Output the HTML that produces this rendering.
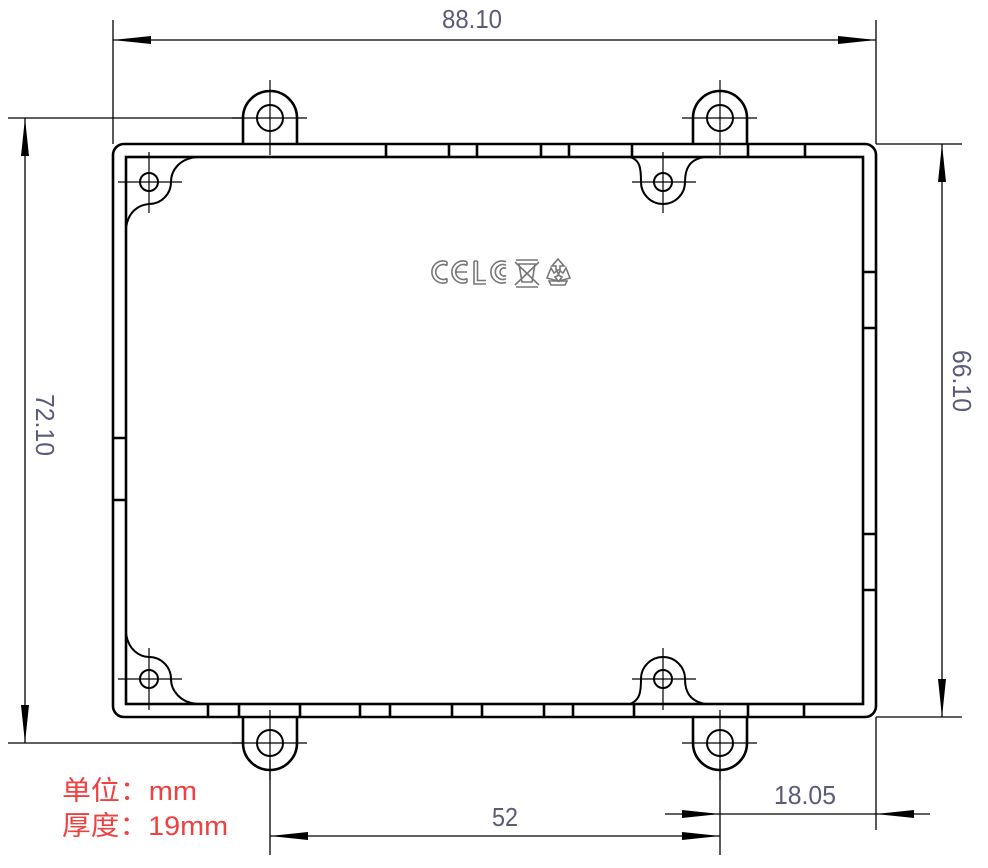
<!DOCTYPE html>
<html><head><meta charset="utf-8"><style>
html,body{margin:0;padding:0;background:#fff;width:988px;height:868px;overflow:hidden}
svg{display:block}
.d{font-family:"Liberation Sans Narrow","Liberation Sans",sans-serif;fill:#5a5a7a;font-size:26px}
.r{font-family:"Liberation Sans","Noto Sans CJK SC",sans-serif;fill:#f04040;font-size:27px}
</style></head><body>
<svg width="988" height="868" viewBox="0 0 988 868" xmlns="http://www.w3.org/2000/svg">
<defs>
<marker id="a" viewBox="-40 0 40 10" refX="0" refY="5" markerWidth="40" markerHeight="10" markerUnits="userSpaceOnUse" orient="auto-start-reverse"><path d="M0,5 L-38,1 L-38,9 Z" fill="#000"/></marker>
</defs>
<g stroke="#000" fill="none" stroke-width="1.3">
<line x1="113" y1="20" x2="113" y2="144"/><line x1="876" y1="20" x2="876" y2="144"/>
<line x1="8" y1="118" x2="243" y2="118"/><line x1="8" y1="743" x2="243" y2="743"/>
<line x1="876" y1="144" x2="962" y2="144"/><line x1="876" y1="717" x2="962" y2="717"/>
<line x1="270" y1="760" x2="270" y2="855"/><line x1="720" y1="760" x2="720" y2="855"/>
<line x1="876" y1="717" x2="876" y2="830"/>
<line x1="113" y1="40" x2="876" y2="40" marker-start="url(#a)" marker-end="url(#a)"/>
<line x1="25" y1="118" x2="25" y2="743" marker-start="url(#a)" marker-end="url(#a)"/>
<line x1="942" y1="144" x2="942" y2="717" marker-start="url(#a)" marker-end="url(#a)"/>
<line x1="270" y1="836" x2="720" y2="836" marker-start="url(#a)" marker-end="url(#a)"/>
<line x1="665" y1="814" x2="930" y2="814"/>
<path d="M720,814 L682,810 L682,818 Z" fill="#000" stroke="none"/>
<path d="M876,814 L914,810 L914,818 Z" fill="#000" stroke="none"/>
<g stroke-width="1.2">
<line x1="232" y1="118" x2="307" y2="118"/><line x1="270" y1="80" x2="270" y2="155"/>
<line x1="682" y1="118" x2="757" y2="118"/><line x1="720" y1="80" x2="720" y2="155"/>
<line x1="232" y1="743" x2="307" y2="743"/><line x1="720" y1="710" x2="720" y2="780"/><line x1="270" y1="710" x2="270" y2="780"/>
<line x1="682" y1="743" x2="757" y2="743"/>
<line x1="118" y1="182" x2="182" y2="182"/><line x1="149" y1="152" x2="149" y2="213"/>
<line x1="632" y1="182" x2="696" y2="182"/><line x1="663" y1="152" x2="663" y2="213"/>
<line x1="118" y1="679" x2="182" y2="679"/><line x1="149" y1="648" x2="149" y2="710"/>
<line x1="632" y1="679" x2="696" y2="679"/><line x1="663" y1="648" x2="663" y2="710"/>
</g>
</g>
<g stroke="#000" fill="none" stroke-width="2.6">
<rect x="113" y="144" width="763" height="573" rx="11"/>
<rect x="126" y="157" width="737" height="547"/>
<path d="M243,144 L243,118 A27,27 0 0 1 297,118 L297,144"/>
<path d="M693,144 L693,118 A27,27 0 0 1 747,118 L747,144"/>
<path d="M243,717 L243,743 A27,27 0 0 0 297,743 L297,717"/>
<path d="M693,717 L693,743 A27,27 0 0 0 747,743 L747,717"/>
<path d="M386,144V157M449,144V157M477,144V157M541,144V157M569,144V157M632,144V157M748,144V157M805,144V157"/>
<path d="M208,704V717M239,704V717M300,704V717M360,704V717M390,704V717M452,704V717M482,704V717M544,704V717M573,704V717M634,704V717M748,704V717M804,704V717"/>
<path d="M113,438H126M113,500H126"/>
<path d="M863,272H876M863,328H876M863,534H876M863,590H876"/>
<path d="M126,228 C128,212 138,205 149,204 A22,22 0 0 0 171,182 C171,170 180,158 198,157" stroke-width="2"/>
<path d="M630,157 C640,160 641,168 641,182 A22,22 0 0 0 685,182 C685,168 690,159 705,157" stroke-width="2"/>
<path d="M126,633 C128,650 140,657 149,657 A22,22 0 0 1 171,679 C171,690 180,703 198,704" stroke-width="2"/>
<path d="M630,704 C640,700 641,692 641,679 A22,22 0 0 1 685,679 C685,692 690,701 705,704" stroke-width="2"/>
</g>
<g stroke="#000" fill="none" stroke-width="2">
<circle cx="270" cy="118" r="13"/><circle cx="720" cy="118" r="13"/>
<circle cx="270" cy="743" r="13"/><circle cx="720" cy="743" r="13"/>
<circle cx="149" cy="182" r="9"/><circle cx="663" cy="182" r="9"/>
<circle cx="149" cy="679" r="9"/><circle cx="663" cy="679" r="9"/>
</g>
<g fill="none" stroke="#777" stroke-width="1.6">
<path d="M447,261.8 A11,11 0 1 0 447,282.2 M447,265.5 A7.5,7.5 0 1 0 447,278.5 M447,261.8 V265.5 M447,282.2 V278.5"/>
<path d="M467,261.8 A11,11 0 1 0 467,282.2 M467,265.5 A7.5,7.5 0 1 0 467,278.5 M467,261.8 V265.5 M467,282.2 V278.5 M455,272 H467"/>
<path d="M474,261 V284 H486 M477.5,261 V280.5 H486 M474,261 H477.5"/>
<path d="M506,261.8 A11,11 0 1 0 506,282.2 M506,265.2 A7.5,7.5 0 1 0 506,278.8 M506,268.5 A4,4 0 1 0 506,275.5"/>
<path d="M516,260 H538 M519,264 L522,282 H532 L535,264 Z M515,262 L539,285 M539,262 L515,285 M516,287 H538"/>
<path d="M558,259 L564,266 L560,266 L560,270 L556,270 L556,266 L552,266 Z"/>
<path d="M547,278 L551,268 L554,273 L557,271 L559,275 L555,277 L558,281 Z"/>
<path d="M570,278 L566,268 L563,273 L560,271 L558,275 L562,277 L559,281 Z"/>
<path d="M549,281 H567 L565,285 H551 Z"/>
</g>
<text class="d" x="472" y="28" text-anchor="middle" textLength="60" lengthAdjust="spacingAndGlyphs">88.10</text>
<text class="d" transform="translate(36,425) rotate(90)" text-anchor="middle" textLength="62" lengthAdjust="spacingAndGlyphs">72.10</text>
<text class="d" transform="translate(953,381) rotate(90)" text-anchor="middle" textLength="62" lengthAdjust="spacingAndGlyphs">66.10</text>
<text class="d" x="505" y="826" text-anchor="middle" textLength="26" lengthAdjust="spacingAndGlyphs">52</text>
<text class="d" x="805" y="804" text-anchor="middle" textLength="62" lengthAdjust="spacingAndGlyphs">18.05</text>
<text class="r" x="62" y="800" textLength="135" lengthAdjust="spacingAndGlyphs">单位：mm</text>
<text class="r" x="62" y="835" textLength="166" lengthAdjust="spacingAndGlyphs">厚度：19mm</text>
</svg>
</body></html>
